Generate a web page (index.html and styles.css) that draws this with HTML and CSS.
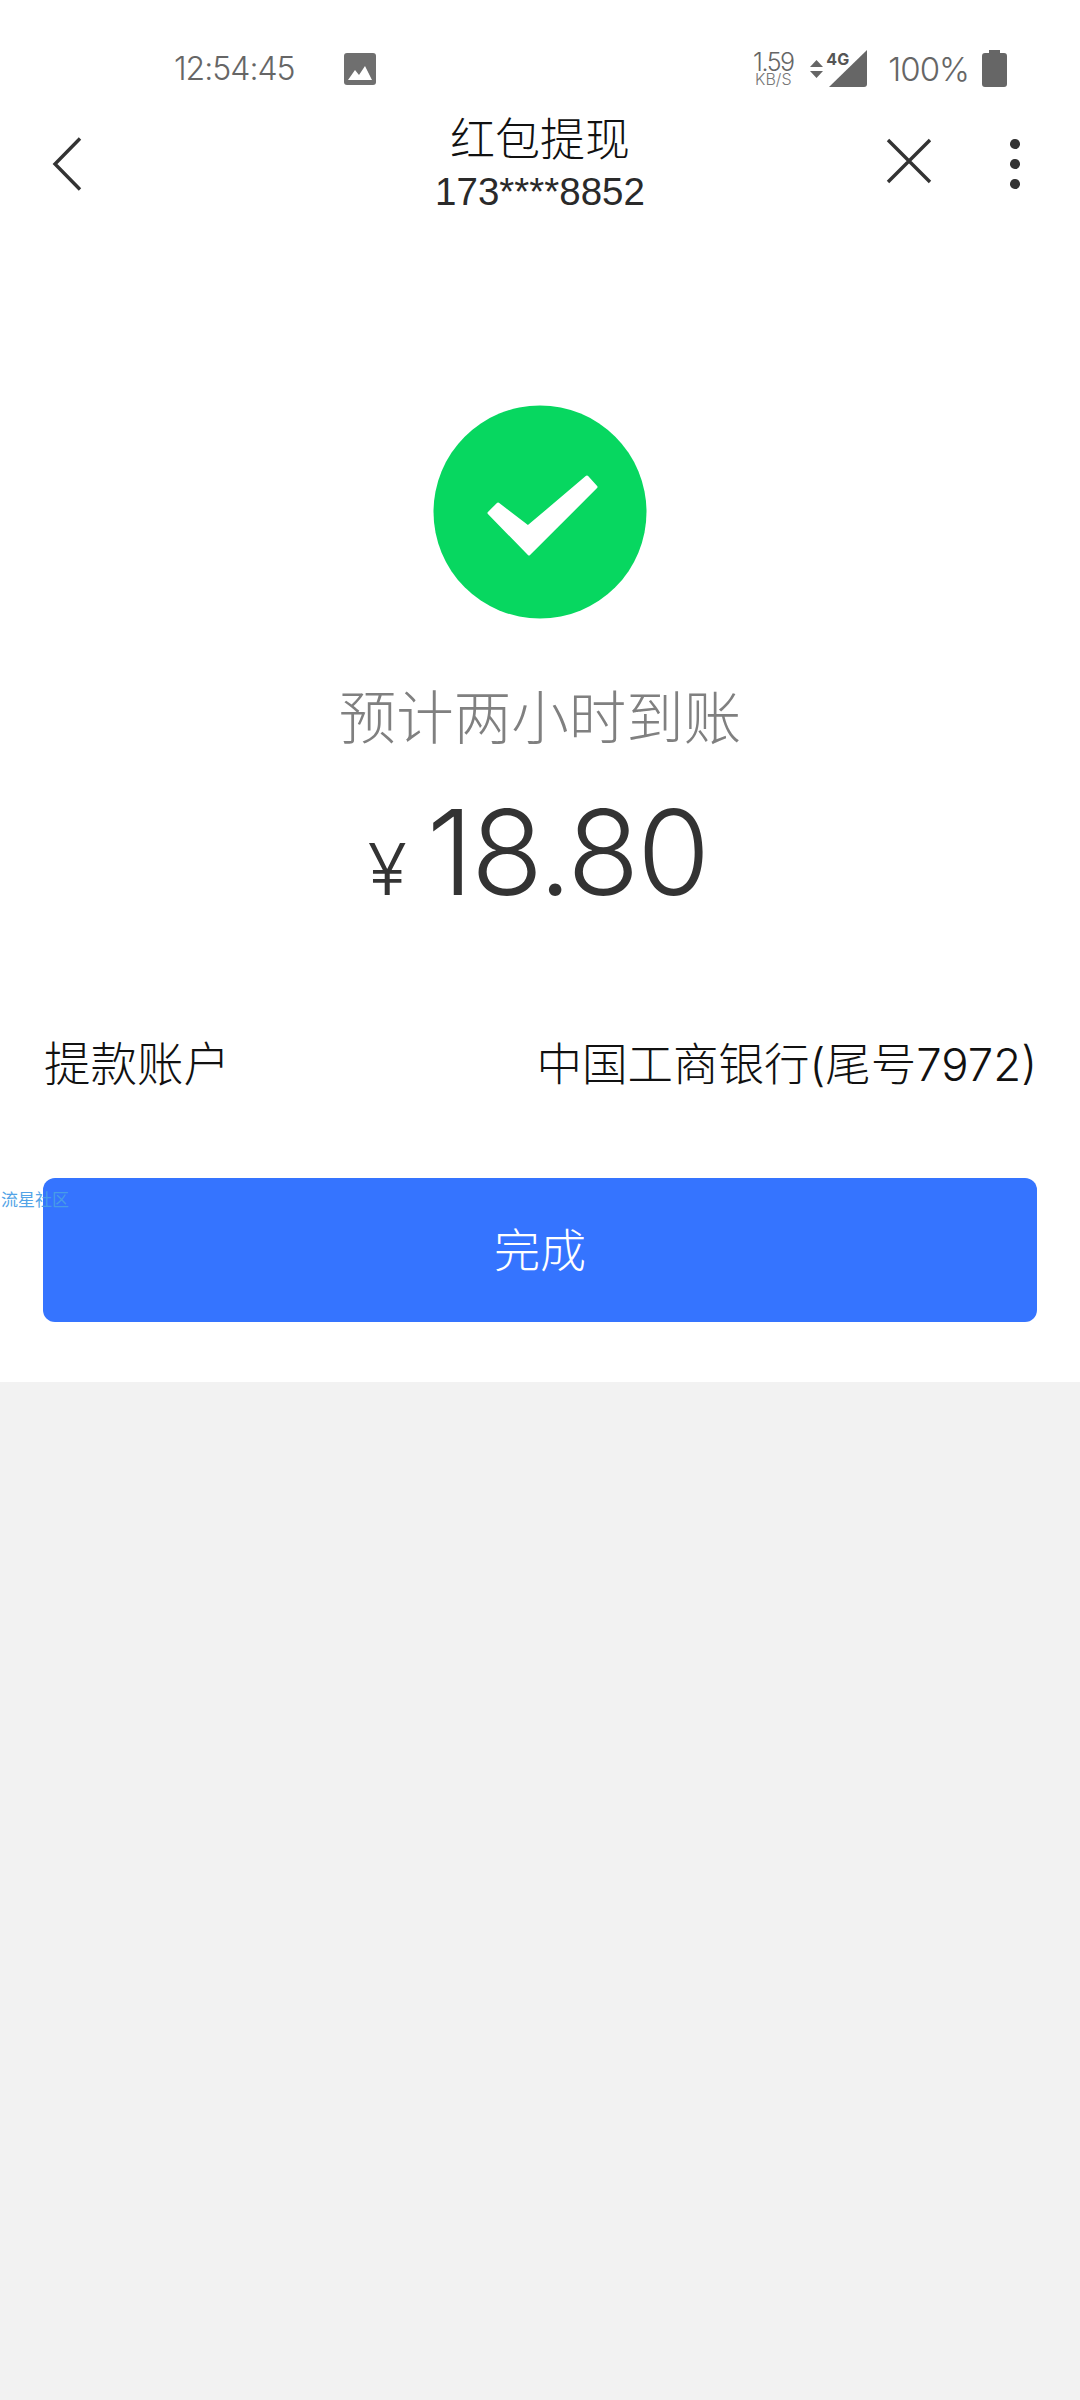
FILE: index.html
```html
<!DOCTYPE html>
<html lang="zh-CN">
    <head>
        <meta charset="UTF-8" />
        <title>红包提现</title>
        <link rel="stylesheet" href="styles.css">
    </head>

    <body>
        <div class="sheet">
            <div class="status-bar">
                <div class="status-left">
                    <span class="clock">12:54:45</span>
                    <svg class="pic-icon" viewBox="0 0 32 32">
                        <rect width="32" height="32" rx="3" fill="#6f6f6f" />
                        <path d="M4 27 L11 17 L15 22 L21 13 L28 27 Z" fill="#fff" />
                    </svg>
                </div>
                <div class="status-right">
                    <div class="speed"><span class="speed-num">1.59</span><span class="speed-unit">KB/S</span></div>
                    <svg class="arrows" viewBox="0 0 13 18">
                        <path d="M6.500 0 L13 7 L0 7 Z M0 11 L13 11 L6.500 18 Z" fill="#666" />
                    </svg>
                    <div class="signal">
                        <svg viewBox="0 0 38 37">
                            <path d="M38 0 L38 34 Q38 37 35 37 L0 37 Z" fill="#666" />
                        </svg>
                        <span class="net">4G</span>
                    </div>
                    <span class="battery-text">100%</span>
                    <svg class="battery" viewBox="0 0 25 37">
                        <path d="M7 0 H18 V3 H22 Q25 3 25 6 V34 Q25 37 22 37 H3 Q0 37 0 34 V6 Q0 3 3 3 H7 Z" fill="#666" />
                    </svg>
                </div>
            </div>

            <div class="nav-bar">
                <svg class="nav-back" viewBox="0 0 30 54">
                    <path d="M28 1.500 L3 27 L28 52.500" fill="none" stroke="#333" stroke-width="3.400" />
                </svg>
                <div class="nav-title">
                    <div class="title-main">红包提现</div>
                    <div class="title-sub">173****8852</div>
                </div>
                <svg class="nav-close" viewBox="0 0 46 46">
                    <path d="M2 2 L44 44 M44 2 L2 44" fill="none" stroke="#333" stroke-width="3.400" />
                </svg>
                <div class="nav-more"><i></i><i></i><i></i></div>
            </div>

            <div class="result">
                <svg class="ok-icon" viewBox="0 0 214 214">
                    <circle cx="107" cy="107" r="106.500" fill="#07d760" />
                    <path d="M56 108 L65 99 L95 122 L154 72 L163 82 L96 149 Z" fill="#fff" stroke="#fff" stroke-width="3" stroke-linejoin="round" />
                </svg>
                <div class="eta">预计两小时到账</div>
                <div class="money"><span class="yen">¥</span><span class="amount">18.80</span></div>
            </div>

            <div class="account-row">
                <span class="account-label">提款账户</span>
                <span>中国工商银行(尾号7972)</span>
            </div>

            <div class="btn-wrap">
                <div class="done-btn">完成</div>
                <span class="mark">流星社区</span>
            </div>
        </div>
    </body>
</html>
```

FILE: styles.css
```css
* {
    margin: 0;
    padding: 0;
    box-sizing: border-box;
}

html,
body {
    height: 100%;
}

body {
    width: 1080px;
    height: 2400px;
    overflow: hidden;
    background: #f2f2f2;
    font-family: "Inter", "Noto Sans CJK SC", sans-serif;
    font-weight: 300;
}

.sheet {
    background: #fff;
    height: 1382px;
}

.status-bar {
    height: 100px;
    padding: 50px 73px 0 174px;
    display: flex;
    justify-content: space-between;
    color: #666;
}

.status-left,
.status-right {
    display: flex;
    align-items: center;
    height: 37px;
}

.clock {
    font-size: 32px;
    letter-spacing: -1px;
    width: 170px;
}

.pic-icon {
    width: 32px;
    height: 32px;
}

.speed {
    display: flex;
    flex-direction: column;
    align-items: center;
    gap: 1px;
    width: 40px;
}

.speed-num {
    font-size: 25px;
    letter-spacing: -1.500px;
    line-height: 20px;
}

.speed-unit {
    font-size: 16px;
    line-height: 13px;
    color: #777;
}

.arrows {
    width: 13px;
    height: 18px;
    margin-left: 17px;
}

.signal {
    position: relative;
    width: 38px;
    height: 37px;
    margin-left: 6px;
}

.signal svg {
    display: block;
    width: 38px;
    height: 37px;
}

.net {
    position: absolute;
    left: -3px;
    top: -1px;
    font-size: 16px;
    font-weight: 700;
    color: #555;
}

.battery-text {
    font-size: 33px;
    letter-spacing: -1px;
    margin-left: 21px;
}

.battery {
    width: 25px;
    height: 37px;
    margin-left: 13px;
}

.nav-bar {
    height: 120px;
    padding: 0 0 0 52px;
    display: flex;
    align-items: flex-start;
    position: relative;
}

.nav-back {
    width: 30px;
    height: 54px;
    margin-top: 37px;
}

.nav-title {
    position: absolute;
    left: 0;
    right: 0;
    top: 16px;
    text-align: center;
    color: #111;
}

.title-main {
    font-size: 45px;
    line-height: 48px;
}

.title-sub {
    font-family: "Liberation Sans", sans-serif;
    font-weight: 400;
    font-size: 38.500px;
    line-height: 44px;
    margin-top: 6px;
    color: #2a2a2a;
}

.nav-close {
    width: 46px;
    height: 46px;
    margin-left: 804px;
    margin-top: 38px;
}

.nav-more {
    display: flex;
    flex-direction: column;
    gap: 10.500px;
    margin-left: 78px;
    margin-top: 39px;
}

.nav-more i {
    display: block;
    width: 9.500px;
    height: 9.500px;
    border-radius: 50%;
    background: #333;
}

.result {
    display: flex;
    flex-direction: column;
    align-items: center;
    padding-top: 185px;
}

.ok-icon {
    width: 214px;
    height: 214px;
}

.eta {
    font-size: 57.500px;
    line-height: 70px;
    color: #808080;
    margin-top: 64px;
}

.money {
    display: flex;
    align-items: baseline;
    color: #333;
    margin-top: 34px;
    margin-right: 4px;
    height: 130px;
}

.yen {
    font-size: 72px;
    margin-right: 20px;
}

.amount {
    font-size: 118px;
    line-height: 130px;
    letter-spacing: -2px;
}

.account-row {
    display: flex;
    justify-content: space-between;
    align-items: baseline;
    padding: 0 43px 0 44px;
    margin-top: 117px;
    font-size: 45.500px;
    line-height: 60px;
    color: #111;
}

.account-label {
    font-size: 46.500px;
}

.btn-wrap {
    position: relative;
    padding: 0 43px;
    margin-top: 83px;
}

.done-btn {
    height: 144px;
    line-height: 144px;
    background: #3574ff;
    border-radius: 12px;
    color: #fff;
    font-size: 46px;
    text-align: center;
}

.mark {
    position: absolute;
    left: 1px;
    top: 8px;
    font-size: 17px;
    font-weight: 400;
    color: #4a9fe6;
    opacity: 0.95;
}
```
